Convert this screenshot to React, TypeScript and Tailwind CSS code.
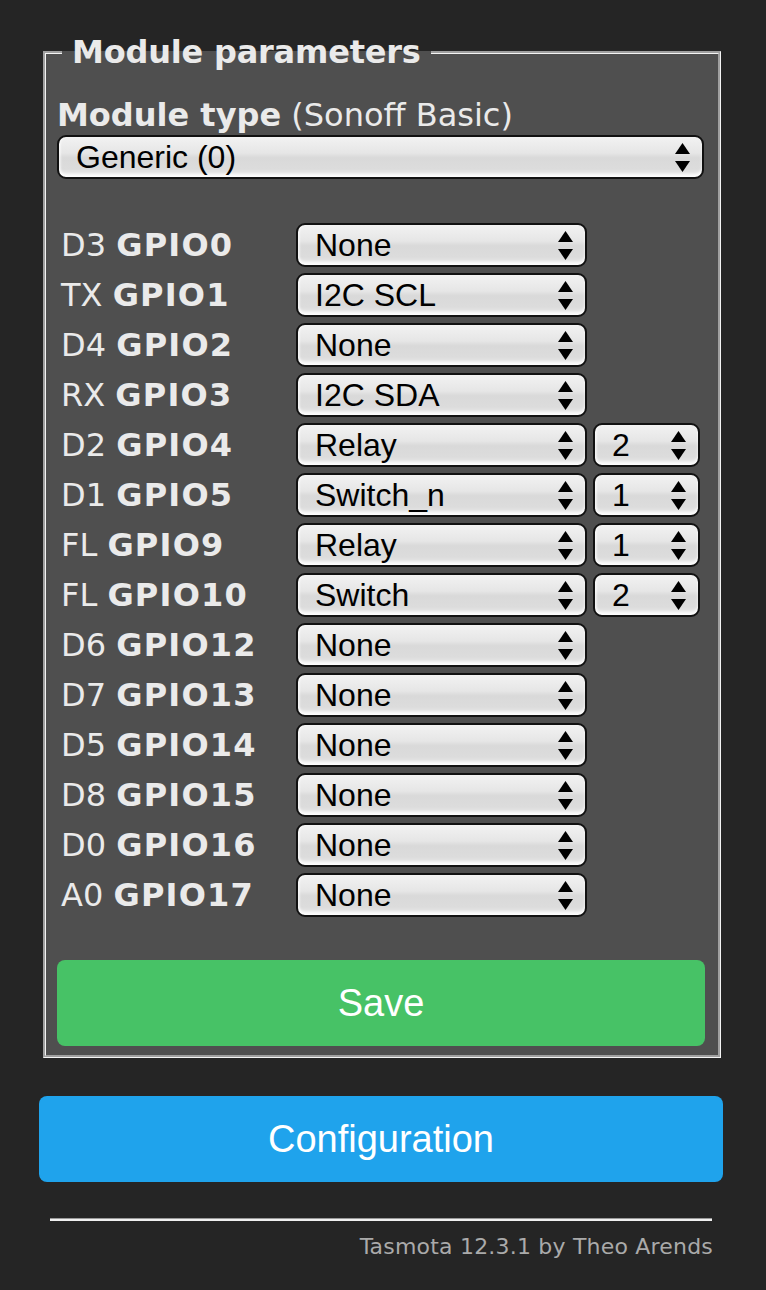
import React from 'react';

interface Pin {
    pad: string;
    gpio: string;
    value: string;
    index?: string;
}

const pins: Pin[] = [
    { pad: 'D3', gpio: 'GPIO0', value: 'None' },
    { pad: 'TX', gpio: 'GPIO1', value: 'I2C SCL' },
    { pad: 'D4', gpio: 'GPIO2', value: 'None' },
    { pad: 'RX', gpio: 'GPIO3', value: 'I2C SDA' },
    { pad: 'D2', gpio: 'GPIO4', value: 'Relay', index: '2' },
    { pad: 'D1', gpio: 'GPIO5', value: 'Switch_n', index: '1' },
    { pad: 'FL', gpio: 'GPIO9', value: 'Relay', index: '1' },
    { pad: 'FL', gpio: 'GPIO10', value: 'Switch', index: '2' },
    { pad: 'D6', gpio: 'GPIO12', value: 'None' },
    { pad: 'D7', gpio: 'GPIO13', value: 'None' },
    { pad: 'D5', gpio: 'GPIO14', value: 'None' },
    { pad: 'D8', gpio: 'GPIO15', value: 'None' },
    { pad: 'D0', gpio: 'GPIO16', value: 'None' },
    { pad: 'A0', gpio: 'GPIO17', value: 'None' },
];

function Arrows() {
    return (
        <svg width="15" height="29" viewBox="0 0 15 29" className="shrink-0">
            <polygon points="7.5,0 15,11 0,11" fill="#000" />
            <polygon points="0,18 15,18 7.5,29" fill="#000" />
        </svg>
    );
}

// glossy Safari-looking select box
function FakeSelect({ value, className }: { value: string; className: string }) {
    return (
        <div
            className={`flex h-[44px] items-center justify-between rounded-[9px] border-2 border-[#111] pl-[17px] pr-[12px] bg-[linear-gradient(to_bottom,#f2f2f2_0%,#e6e6e6_40%,#d9d9d9_52%,#dcdcdc_80%,#ececec_100%)] shadow-[inset_0_-3px_3px_rgba(255,255,255,0.85),inset_2px_0_2px_rgba(255,255,255,0.5)] text-[32px] leading-none text-black font-['Liberation_Sans',Arial,sans-serif] ${className}`}
        >
            <span>{value}</span>
            <Arrows />
        </div>
    );
}

export default function App() {
    return (
        <div className="min-h-[1290px] bg-[#252525] font-['DejaVu_Sans',Verdana,sans-serif] text-[#eaeaea]">
            <div className="ml-[39px] w-[684px] pt-[34px]">
                {/* Module parameters */}
                <fieldset className="ml-[4px] mr-[3px] border-[3px] border-[#f4f4f4] [border-style:groove] bg-[#4f4f4f] pl-[11px] pr-[13px] pb-[9px]">
                    <legend className="ml-[5px] px-[10px] text-[32px] font-bold leading-[37px] tracking-[-0.2px]">Module parameters</legend>

                    <div className="mt-[26px] text-[32px] leading-[37px]">
                        <b>Module type</b> (Sonoff Basic)
                    </div>
                    <FakeSelect value="Generic (0)" className="mt-[1px] w-[647px]" />

                    <div className="mt-[41px] flex flex-col">
                        {pins.map((p) => (
                            <div key={p.gpio} className="flex h-[50px] items-center">
                                <div className="w-[239px] pl-[4px] text-[32px] leading-none whitespace-nowrap">
                                    {p.pad} <b className="tracking-[1.2px]">{p.gpio}</b>
                                </div>
                                <FakeSelect value={p.value} className="w-[291px]" />
                                {p.index && <FakeSelect value={p.index} className="ml-[6px] w-[107px]" />}
                            </div>
                        ))}
                    </div>

                    <button className="mt-[40px] block h-[86px] w-[648px] rounded-[8px] bg-[#47c266] text-[38px] text-white font-['Liberation_Sans',Arial,sans-serif]">
                        Save
                    </button>
                </fieldset>

                <button className="mt-[38px] block h-[86px] w-[684px] rounded-[8px] bg-[#1fa3ec] text-[38px] text-white font-['Liberation_Sans',Arial,sans-serif]">
                    Configuration
                </button>

                <div className="mx-[11px] mt-[36px] border-t-[1px] border-b-[2px] border-t-[#9a9a9a] border-b-[#f0f0f0]" />

                <div className="mr-[10px] mt-[9px] text-right text-[22px] tracking-[0.2px] text-[#aaa]">
                    Tasmota 12.3.1 by Theo Arends
                </div>
            </div>
        </div>
    );
}
